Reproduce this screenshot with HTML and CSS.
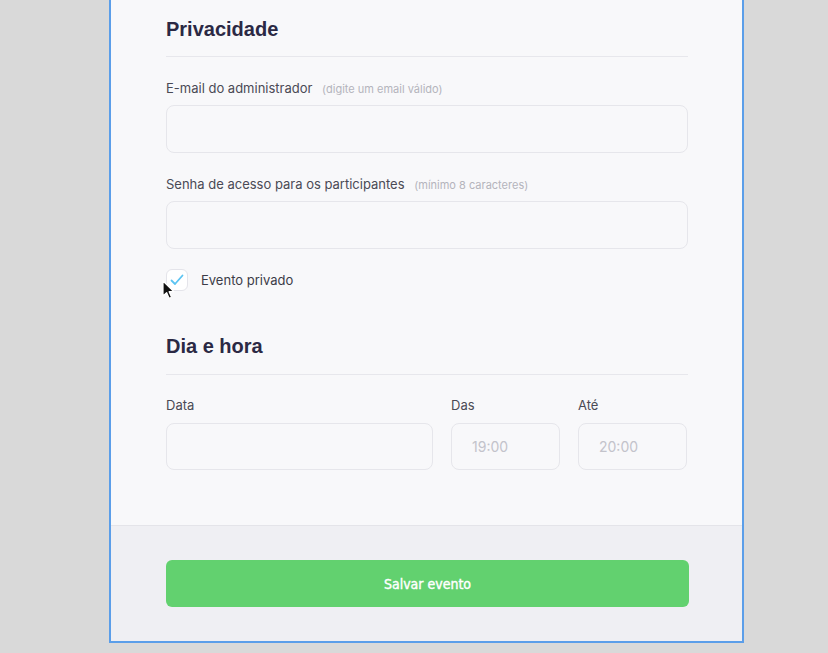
FILE: index.html
```html
<!DOCTYPE html>
<html lang="pt">
<head>
<meta charset="utf-8">
<title>Evento</title>
<link rel="stylesheet" href="styles.css">
</head>
<body>
<div class="panel">
  <div class="content">
    <h2 class="section-title">Privacidade</h2>
    <div class="field">
      <label class="label">E-mail do administrador <span class="hint">(digite um email válido)</span></label>
      <div class="input"></div>
    </div>
    <div class="field">
      <label class="label">Senha de acesso para os participantes <span class="hint">(mínimo 8 caracteres)</span></label>
      <div class="input"></div>
    </div>
    <div class="check-row">
      <span class="checkbox">
        <svg width="14" height="12" viewBox="0 0 14 12"><path d="M1.5 6.5 L5 10 L12.5 1.5" fill="none" stroke="#5cc4f2" stroke-width="1.8" stroke-linecap="round" stroke-linejoin="round"/></svg>
      </span>
      <span class="check-label">Evento privado</span>
      <svg class="cursor" width="16" height="20" viewBox="0 0 16 20"><path d="M1 1 L1 16 L4.6 12.6 L7.2 18.4 L9.6 17.3 L7.1 11.7 L12 11.7 Z" fill="#111" stroke="#fff" stroke-width="1.2" stroke-linejoin="round"/></svg>
    </div>
    <h2 class="section-title second">Dia e hora</h2>
    <div class="date-row">
      <div class="field date">
        <label class="label">Data</label>
        <div class="input"></div>
      </div>
      <div class="field time">
        <label class="label">Das</label>
        <div class="input placeholder">19:00</div>
      </div>
      <div class="field time">
        <label class="label">Até</label>
        <div class="input placeholder">20:00</div>
      </div>
    </div>
  </div>
  <div class="footer">
    <button class="save">Salvar evento</button>
  </div>
</div>
</body>
</html>
```
FILE: styles.css
```css
html, body {
  margin: 0;
  padding: 0;
  background: #d9d9d9;
  width: 828px;
  height: 653px;
  overflow: hidden;
  font-family: "Inter", "Noto Sans", sans-serif;
}
.panel {
  margin-left: 109px;
  width: 631px;
  background: #f8f8fa;
  border: 2px solid #5b9ee9;
  border-top: none;
}
.content {
  padding: 17px 54px 55px 55px;
}
.section-title {
  margin: 0;
  font-family: "Liberation Sans", Arial, sans-serif;
  font-weight: 700;
  font-size: 20px;
  line-height: 24px;
  color: #2b2944;
  padding-bottom: 15px;
  border-bottom: 1px solid #e7e7ec;
}
.section-title.second {
  margin-top: 43px;
  padding-bottom: 16px;
}
.field {
  margin-top: 21px;
}
.label {
  display: block;
  font-size: 13px;
  line-height: 20px;
  color: #4a4a55;
}
.hint {
  font-size: 11px;
  color: #b4b4bc;
  margin-left: 6px;
}
.input {
  margin-top: 6px;
  height: 46px;
  border: 1px solid #e6e6eb;
  border-radius: 8px;
  background: #f8f8fa;
  box-sizing: content-box;
}
.check-row {
  position: relative;
  display: flex;
  align-items: center;
  margin-top: 20px;
  height: 22px;
}
.checkbox {
  width: 20px;
  height: 20px;
  border: 1px solid #e4e4ea;
  border-radius: 6px;
  background: #ffffff;
  display: flex;
  align-items: center;
  justify-content: center;
}
.check-label {
  margin-left: 13px;
  font-size: 13px;
  color: #3c3c48;
}
.cursor {
  position: absolute;
  left: -4px;
  top: 11px;
}
.date-row {
  display: flex;
  gap: 18px;
  margin-top: 20px;
}
.date-row .field {
  margin-top: 0;
}
.date-row .input {
  margin-top: 8px;
  height: 45px;
}
.date {
  width: 267px;
}
.time {
  width: 109px;
}
.placeholder {
  display: flex;
  align-items: center;
  padding-left: 20px;
  font-size: 14px;
  color: #c3c3cb;
}
.footer {
  background: #efeff3;
  border-top: 1px solid #e4e4e9;
  padding: 34px 53px 34px 55px;
}
.save {
  display: block;
  width: 523px;
  height: 47px;
  border: none;
  border-radius: 6px;
  background: #62d16f;
  color: #ffffff;
  font-family: "Liberation Sans Narrow", "DejaVu Sans Condensed", "Liberation Sans", sans-serif;
  font-stretch: condensed;
  font-weight: 400;
  font-size: 14px;
  -webkit-text-stroke: 0.4px #ffffff;
  padding: 0;
}
```
